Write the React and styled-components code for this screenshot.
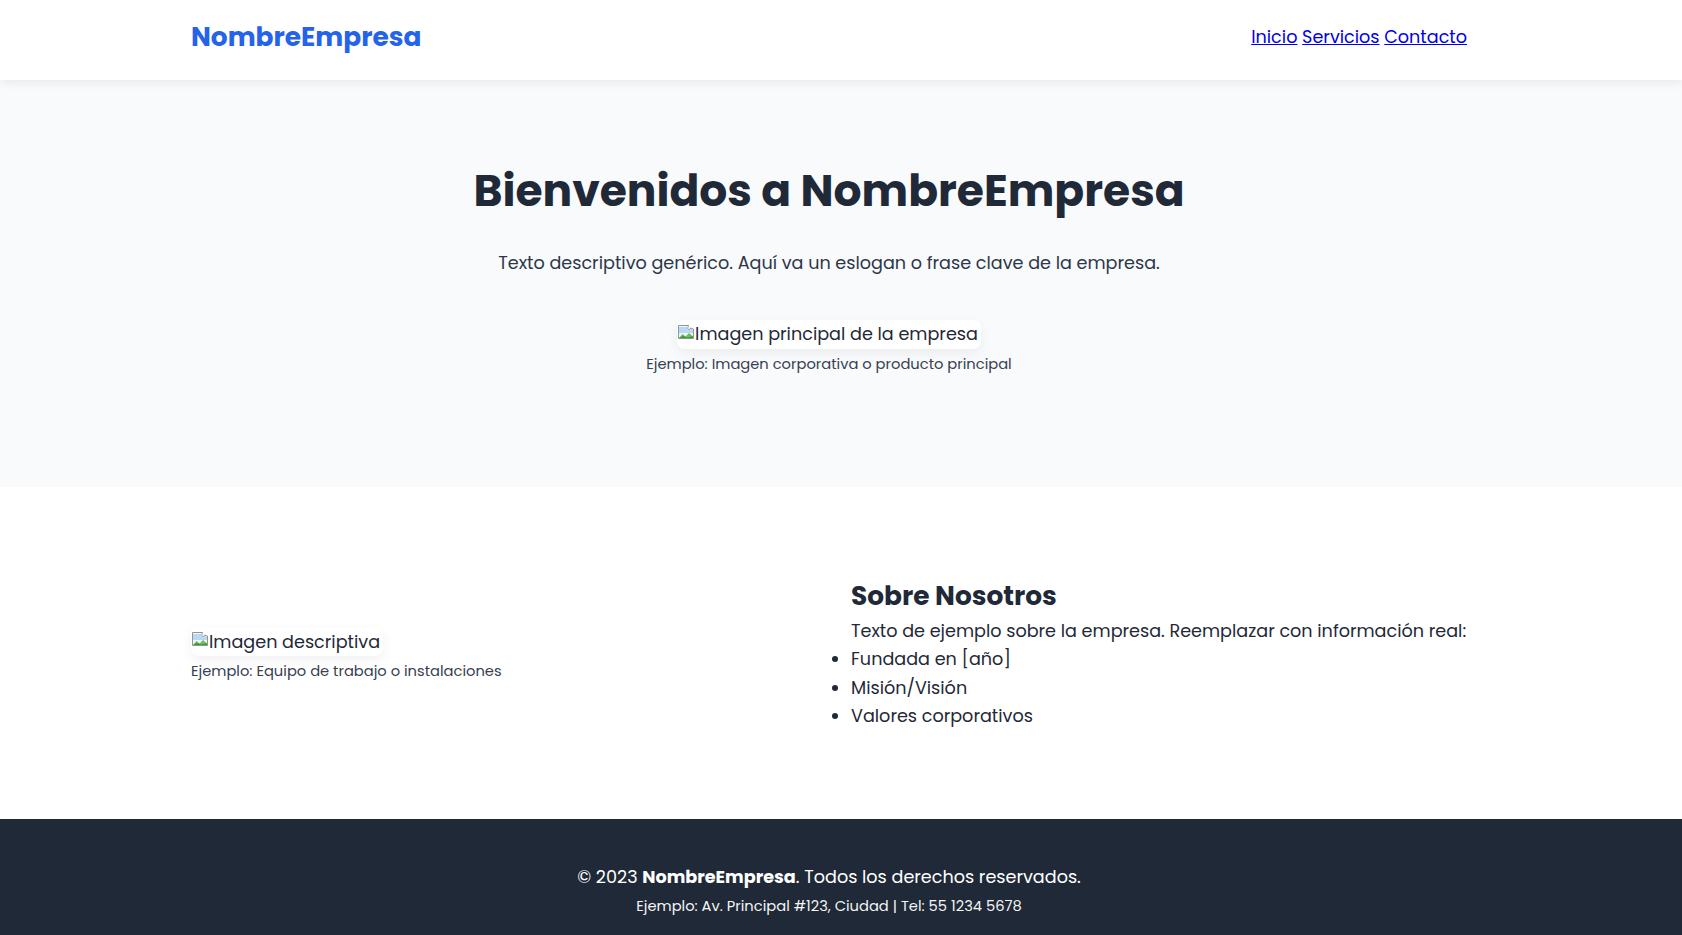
import styled, { createGlobalStyle } from 'styled-components';

const GlobalStyle = createGlobalStyle`
  * {
    box-sizing: border-box;
  }

  ::-webkit-scrollbar {
    display: none;
  }

  body {
    margin: 0;
    font-family: Poppins, Inter, "Open Sans", sans-serif;
    font-size: 17.6px;
    color: #1f2937;
    background: #ffffff;
    line-height: 1.6;
  }
`;

const Container = styled.div`
  max-width: 1300px;
  margin: 0 auto;
  padding-right: 24px;
`;

const Header = styled.header`
  background: #ffffff;
  box-shadow: 0 2px 10px rgba(0, 0, 0, 0.08);
  position: relative;
  z-index: 1;
`;

const HeaderInner = styled(Container)`
  display: flex;
  justify-content: space-between;
  align-items: center;
  padding-top: 17px;
  padding-bottom: 24px;
`;

const Logo = styled.div`
  font-size: 26.4px;
  line-height: 39px;
  font-weight: 700;
  color: #2563eb;
`;

const Nav = styled.nav`
  font-size: 17.6px;
  padding-top: 2px;
`;

const NavLink = styled.a`
  color: #0000ee;
  text-decoration: underline;
`;

const Hero = styled.section`
  background: #f8fafc;
  padding: 87px 0 113px;
  text-align: center;
`;

const Title = styled.h1`
  margin: 0;
  font-size: 44px;
  line-height: 48px;
  font-weight: 700;
  color: #1f2937;
`;

const Lead = styled.p`
  margin: 34px 0 0;
  font-size: 17.6px;
  line-height: 28px;
  color: #2d3748;
`;

const Figure = styled.figure`
  margin: ${(p) => p.$top || 0}px 0 0;
  display: flex;
  flex-direction: column;
  align-items: ${(p) => (p.$left ? 'flex-start' : 'center')};
`;

const ImageBox = styled.span`
  display: inline-flex;
  align-items: center;
  height: 29px;
  border-radius: 8px;
  background: #ffffff;
  box-shadow: 0 4px 12px rgba(0, 0, 0, 0.06);
  font-size: 17.6px;
  color: #1f2937;
  padding-right: 3px;

  svg {
    flex: none;
    margin-top: -4px;
  }
`;

const Caption = styled.figcaption`
  margin-top: 5px;
  font-size: 14.7px;
  line-height: 20px;
  color: #374151;
`;

const About = styled.section`
  background: #ffffff;
  padding: 91px 0 88px;
`;

const AboutGrid = styled(Container)`
  display: grid;
  grid-template-columns: 1fr 1fr;
  gap: 44px;
  align-items: center;
`;

const AboutText = styled.div`
  font-size: 17.6px;
  line-height: 28.4px;
`;

const SectionTitle = styled.h2`
  margin: 0 0 3px;
  font-size: 26.4px;
  line-height: 36px;
  font-weight: 700;
  color: #1f2937;
`;

const Paragraph = styled.p`
  margin: 0;
  white-space: nowrap;
`;

const List = styled.ul`
  margin: 0;
  padding-left: 0;
`;

const Footer = styled.footer`
  background: #1f2937;
  color: #ffffff;
  text-align: center;
  padding: 44px 0 40px;
`;

const FooterLine = styled.p`
  margin: 0;
  font-size: 17.6px;
  line-height: 28px;
`;

const FooterSmall = styled.p`
  margin: 4px 0 0;
  font-size: 14.7px;
  line-height: 22px;
  color: #f3f4f6;
`;

const BrokenImage = () => (
  <svg width="18" height="18" viewBox="0 0 18 18">
    <path d="M1.5 1.5h10l-1 3 2 1.5 1-2 3 1v9.5H1.5z" fill="#eef5fb" stroke="#8f959b" />
    <path d="M2 3h9l-.9 2.1L12.6 7l1-2 2.4.8V9H2z" fill="#b9d9f2" />
    <path d="M2 14l3.5-4 3 2.6 3.5-3.6 4 3.6V14H2z" fill="#6cbf55" />
    <path d="M2 14l4-2 4.5 1.4 5.5-1.2V14H2z" fill="#3e9634" />
  </svg>
);

const Picture = ({ alt }) => (
  <ImageBox role="img" aria-label={alt}>
    <BrokenImage />
    {alt}
  </ImageBox>
);

export default function App() {
  return (
    <>
      <GlobalStyle />
      <Header>
        <HeaderInner>
          <Logo>NombreEmpresa</Logo>
          <Nav>
            <NavLink href="#">Inicio</NavLink> <NavLink href="#">Servicios</NavLink>{' '}
            <NavLink href="#">Contacto</NavLink>
          </Nav>
        </HeaderInner>
      </Header>

      <Hero>
        <Container>
          <Title>Bienvenidos a NombreEmpresa</Title>
          <Lead>Texto descriptivo genérico. Aquí va un eslogan o frase clave de la empresa.</Lead>
          <Figure $top={43}>
            <Picture alt="Imagen principal de la empresa" />
            <Caption>Ejemplo: Imagen corporativa o producto principal</Caption>
          </Figure>
        </Container>
      </Hero>

      <About>
        <AboutGrid>
          <Figure $left>
            <Picture alt="Imagen descriptiva" />
            <Caption>Ejemplo: Equipo de trabajo o instalaciones</Caption>
          </Figure>
          <AboutText>
            <SectionTitle>Sobre Nosotros</SectionTitle>
            <Paragraph>Texto de ejemplo sobre la empresa. Reemplazar con información real:</Paragraph>
            <List>
              <li>Fundada en [año]</li>
              <li>Misión/Visión</li>
              <li>Valores corporativos</li>
            </List>
          </AboutText>
        </AboutGrid>
      </About>

      <Footer>
        <Container>
          <FooterLine>
            © 2023 <strong>NombreEmpresa</strong>. Todos los derechos reservados.
          </FooterLine>
          <FooterSmall>Ejemplo: Av. Principal #123, Ciudad | Tel: 55 1234 5678</FooterSmall>
        </Container>
      </Footer>
    </>
  );
}
